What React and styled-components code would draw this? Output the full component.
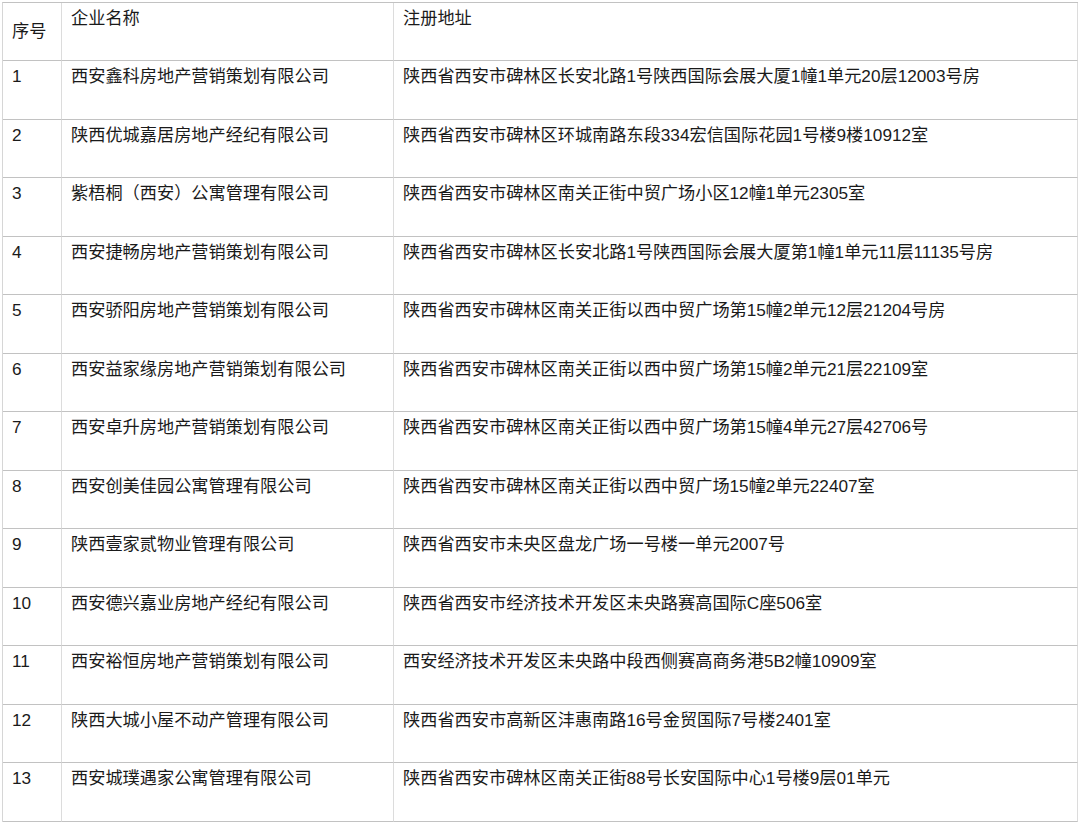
import React from "react";
import styled, { createGlobalStyle } from "styled-components";

const Global = createGlobalStyle`
  html, body { margin: 0; padding: 0; background: #fff; }
  body { font-family: "Liberation Sans", "Noto Sans CJK SC", sans-serif; color: #1a1a1a; }
`;

const Table = styled.table`
  margin: 2px;
  border-collapse: separate;
  border-spacing: 0;
  table-layout: fixed;
  width: 1076px;
  border-top: 1px solid #c2c2c2;
  border-left: 1px solid #d6d6d6;
  font-size: 17.2px;
  line-height: 23px;
`;

const Cell = styled.td`
  box-sizing: border-box;
  height: ${(p) => (p.$head ? "58px" : "58.5px")};
  padding: 4px 9px 0 9px;
  vertical-align: ${(p) => (p.$middle ? "middle" : "top")};
  border-bottom: 1px solid #c2c2c2;
  border-right: 1px solid #dcdcdc;
  white-space: nowrap;
  overflow: hidden;
  font-weight: normal;
  text-align: left;
  ${(p) => (p.$middle ? "padding-top: 0;" : "")}
`;

const rows = [
  ["西安鑫科房地产营销策划有限公司", "陕西省西安市碑林区长安北路1号陕西国际会展大厦1幢1单元20层12003号房"],
  ["陕西优城嘉居房地产经纪有限公司", "陕西省西安市碑林区环城南路东段334宏信国际花园1号楼9楼10912室"],
  ["紫梧桐（西安）公寓管理有限公司", "陕西省西安市碑林区南关正街中贸广场小区12幢1单元2305室"],
  ["西安捷畅房地产营销策划有限公司", "陕西省西安市碑林区长安北路1号陕西国际会展大厦第1幢1单元11层11135号房"],
  ["西安骄阳房地产营销策划有限公司", "陕西省西安市碑林区南关正街以西中贸广场第15幢2单元12层21204号房"],
  ["西安益家缘房地产营销策划有限公司", "陕西省西安市碑林区南关正街以西中贸广场第15幢2单元21层22109室"],
  ["西安卓升房地产营销策划有限公司", "陕西省西安市碑林区南关正街以西中贸广场第15幢4单元27层42706号"],
  ["西安创美佳园公寓管理有限公司", "陕西省西安市碑林区南关正街以西中贸广场15幢2单元22407室"],
  ["陕西壹家贰物业管理有限公司", "陕西省西安市未央区盘龙广场一号楼一单元2007号"],
  ["西安德兴嘉业房地产经纪有限公司", "陕西省西安市经济技术开发区未央路赛高国际C座506室"],
  ["西安裕恒房地产营销策划有限公司", "西安经济技术开发区未央路中段西侧赛高商务港5B2幢10909室"],
  ["陕西大城小屋不动产管理有限公司", "陕西省西安市高新区沣惠南路16号金贸国际7号楼2401室"],
  ["西安城璞遇家公寓管理有限公司", "陕西省西安市碑林区南关正街88号长安国际中心1号楼9层01单元"],
];

export default function App() {
  return (
    <>
      <Global />
      <Table>
        <colgroup>
          <col style={{ width: 59 }} />
          <col style={{ width: 332 }} />
          <col style={{ width: 684 }} />
        </colgroup>
        <thead>
          <tr>
            <Cell as="th" $head $middle>序号</Cell>
            <Cell as="th" $head>企业名称</Cell>
            <Cell as="th" $head>注册地址</Cell>
          </tr>
        </thead>
        <tbody>
          {rows.map(([name, addr], i) => (
            <tr key={i}>
              <Cell>{i + 1}</Cell>
              <Cell>{name}</Cell>
              <Cell>{addr}</Cell>
            </tr>
          ))}
        </tbody>
      </Table>
    </>
  );
}
